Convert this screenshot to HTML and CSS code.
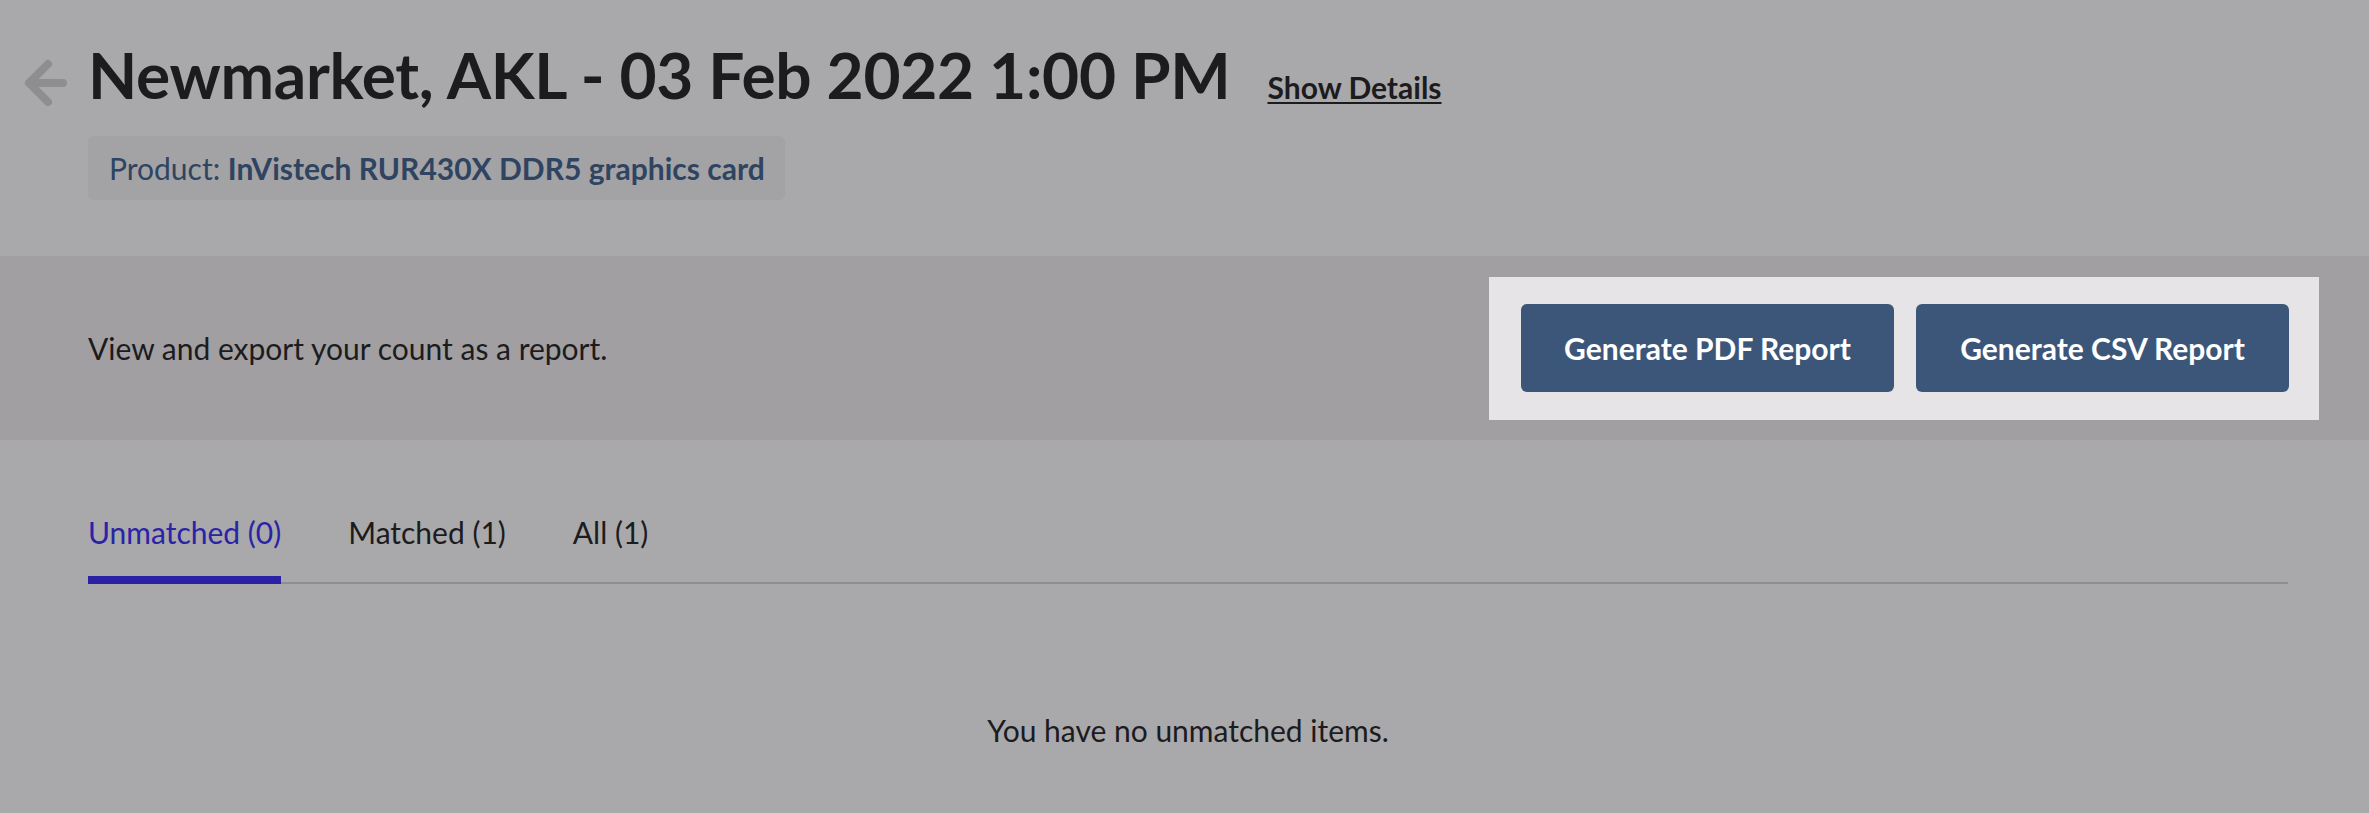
FILE: index.html
```html
<!DOCTYPE html>
<html>

<head>
    <meta charset="utf-8">
    <title>Count report</title>
    <meta name="viewport" content="width=device-width, initial-scale=1">
    <link rel="stylesheet" href="styles.css">
</head>

<body>
    <header class="page-head">
        <a class="back-link" href="#">
            <svg width="48" height="52" viewBox="0 0 48 52">
                <path d="M5 26 H39 M24 7 L5 26 L24 45" fill="none" stroke="#8e8d90" stroke-width="8" stroke-linecap="round" stroke-linejoin="round"/>
            </svg>
        </a>
        <div class="head-main">
            <div class="title-row">
                <h1 class="title">Newmarket, AKL - 03 Feb 2022 1:00 PM</h1>
                <a class="show-details" href="#">Show Details</a>
            </div>
            <div class="product-chip">Product: <strong>InVistech RUR430X DDR5 graphics card</strong></div>
        </div>
    </header>

    <section class="report-band">
        <p>View and export your count as a report.</p>
        <div class="report-actions">
            <button class="btn">Generate PDF Report</button>
            <button class="btn">Generate CSV Report</button>
        </div>
    </section>

    <nav class="tabs">
        <a class="tab active" href="#">Unmatched (0)</a>
        <a class="tab" href="#">Matched (1)</a>
        <a class="tab" href="#">All (1)</a>
    </nav>

    <p class="empty">You have no unmatched items.</p>
</body>

</html>
```

FILE: styles.css
```css
* {
    margin: 0;
    padding: 0;
    box-sizing: border-box;
}

body {
    font: 30px Lato, "Open Sans", sans-serif;
    line-height: 1.2;
    color: #1c1b1d;
    background: #a9a8ab;
}

.page-head {
    display: grid;
    grid-template-columns: 64px 1fr;
    padding: 37px 81px 0 24px;
}

.back-link {
    display: block;
    margin-top: 20px;
}

.back-link svg {
    display: block;
}

.title-row {
    display: flex;
    align-items: baseline;
    gap: 37px;
}

.title {
    font-size: 64px;
    font-weight: 700;
    line-height: 1.2;
    letter-spacing: -0.3px;
}

.show-details {
    color: #1c1b1d;
    font-weight: 700;
    text-decoration: underline;
    text-decoration-thickness: 2px;
    text-underline-offset: 3px;
}

.product-chip {
    display: inline-block;
    margin-top: 22px;
    padding: 14px 20px 14px 21px;
    background: #a3a2a5;
    border-radius: 6px;
    color: #2e4461;
}

.product-chip strong {
    font-weight: 700;
}

.report-band {
    display: flex;
    align-items: center;
    justify-content: space-between;
    margin-top: 56px;
    padding: 21px 50px 20px 88px;
    background: #a19fa2;
}

.report-actions {
    display: flex;
    gap: 22px;
    padding: 27px 30px 28px 32px;
    background: #e6e4e7;
}

.btn {
    font: 700 30px Lato, "Open Sans", sans-serif;
    line-height: 1.2;
    color: #fff;
    background: #3c5679;
    border: none;
    border-radius: 6px;
    padding: 26px 0;
    width: 373px;
}

.tabs {
    display: flex;
    gap: 67px;
    margin: 74px 81px 0 88px;
    border-bottom: 2px solid #8e8d90;
}

.tab {
    color: #1c1b1d;
    text-decoration: none;
    padding-bottom: 26px;
    margin-bottom: -2px;
    border-bottom: 8px solid transparent;
}

.tab.active {
    color: #2a23a6;
    border-bottom-color: #2b21a5;
}

.empty {
    margin: 128px 81px 0 88px;
    text-align: center;
}
```
